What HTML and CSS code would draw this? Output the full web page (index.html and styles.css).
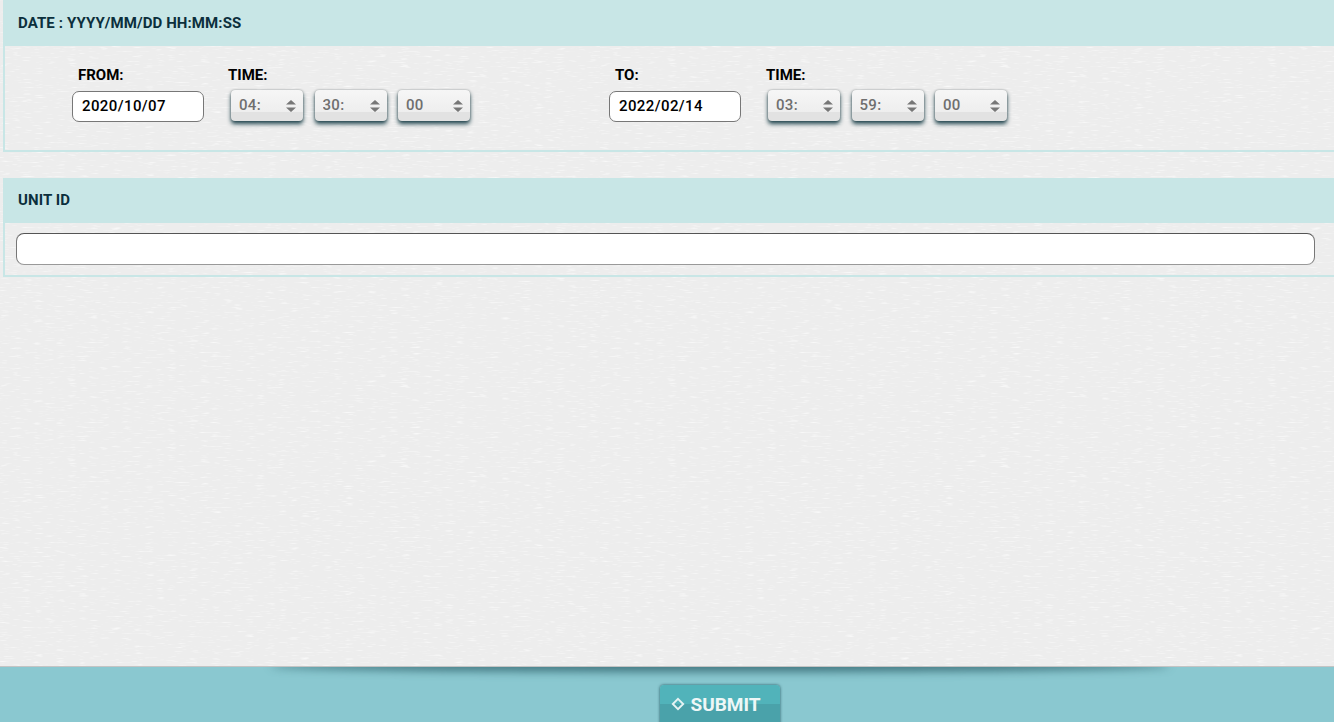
FILE: index.html
```html
<!DOCTYPE html>
<html lang="en">
<head>
<meta charset="utf-8">
<title>Report filter</title>
<link rel="stylesheet" href="styles.css">
</head>
<body>
<main class="content">
  <section class="panel panel-date">
    <h2 class="panel-head">DATE : YYYY/MM/DD HH:MM:SS</h2>
    <div class="range-row">
      <div class="field field-date">
        <label class="label label-indent">FROM:</label>
        <input class="text-input date-input" type="text" value="2020/10/07">
      </div>
      <div class="field field-time">
        <label class="label">TIME:</label>
        <div class="selects">
          <select class="time-select"><option>04:</option></select>
          <select class="time-select"><option>30:</option></select>
          <select class="time-select"><option>00</option></select>
        </div>
      </div>
      <div class="field field-date field-to">
        <label class="label label-indent">TO:</label>
        <input class="text-input date-input" type="text" value="2022/02/14">
      </div>
      <div class="field field-time field-time-to">
        <label class="label">TIME:</label>
        <div class="selects">
          <select class="time-select"><option>03:</option></select>
          <select class="time-select"><option>59:</option></select>
          <select class="time-select"><option>00</option></select>
        </div>
      </div>
    </div>
  </section>
  <section class="panel panel-unit">
    <h2 class="panel-head">UNIT ID</h2>
    <div class="unit-body">
      <input class="text-input unit-input" type="text">
    </div>
  </section>
</main>
<footer class="footer">
  <button class="submit" type="button">
    <svg class="submit-icon" viewBox="0 0 14 14" aria-hidden="true"><path d="M7 1.8 12.2 7 7 12.2 1.8 7Z" fill="none" stroke="#e6f3f3" stroke-width="1.9"/></svg>
    <span>SUBMIT</span>
  </button>
</footer>
</body>
</html>
```
FILE: styles.css
```css
* { box-sizing: border-box; }
html, body { height: 100%; }
body {
  margin: 0;
  height: 722px;
  overflow: hidden;
  display: flex;
  flex-direction: column;
  font-family: "Roboto", "Liberation Sans", sans-serif;
  background-color: #ededed;
  background-image: url("data:image/svg+xml,%3Csvg xmlns='http://www.w3.org/2000/svg' width='600' height='400'%3E%3Cfilter id='n'%3E%3CfeTurbulence type='fractalNoise' baseFrequency='0.09 0.8' numOctaves='2' seed='4'/%3E%3CfeColorMatrix values='0 0 0 0 1 0 0 0 0 1 0 0 0 0 1 2 0 0 0 -1.15'/%3E%3C/filter%3E%3Crect width='600' height='400' filter='url(%23n)'/%3E%3C/svg%3E");
}
.content {
  flex: 1;
  padding-left: 3px;
}
.panel {
  border: 2px solid #c8e6e6;
  border-right: 0;
}
.panel-date {
  height: 152px;
  border-top: 0;
}
.panel-unit {
  height: 99px;
  margin-top: 26px;
}
.panel-head {
  margin: 0;
  background: #c8e6e6;
  color: #0b2f3c;
  font-size: 15px;
  font-weight: 700;
  letter-spacing: 0.1px;
  line-height: 18px;
  padding-left: 13px;
}
.panel-date .panel-head { height: 46px; padding-top: 14px; }
.panel-unit .panel-head { height: 43px; padding-top: 11px; }
.range-row {
  display: flex;
  padding: 20px 0 0 67px;
}
.field { display: flex; flex-direction: column; }
.field-date { width: 132px; }
.field-time { margin-left: 24px; }
.field-time-to { margin-left: 25px; }
.field-to { margin-left: 139px; }
.label {
  color: #000;
  font-size: 15px;
  font-weight: 700;
  line-height: 18px;
  height: 25px;
}
.label-indent { padding-left: 6px; }
.text-input {
  background: #fff;
  border: 1px solid #777;
  border-radius: 7px;
  color: #000;
  font-family: inherit;
  font-size: 15px;
  font-weight: 500;
  letter-spacing: 0.4px;
  outline: 0;
}
.date-input { width: 132px; height: 31px; padding: 0 8px 2px 9px; }
.selects { display: flex; gap: 11.5px; padding-left: 3px; margin-top: -1px; }
.field-time-to .selects { padding-left: 2px; }
.time-select {
  appearance: none;
  -webkit-appearance: none;
  width: 72px;
  height: 31px;
  border: 0;
  border-radius: 4px;
  padding: 0 8px 1px;
  font-family: inherit;
  font-size: 15px;
  font-weight: 500;
  color: #6f6f6f;
  letter-spacing: 0.3px;
  background-color: #eee;
  background-image:
    url("data:image/svg+xml,%3Csvg xmlns='http://www.w3.org/2000/svg' width='12' height='12'%3E%3Cpath d='M6 0l5 4.6H1zM6 12l5-4.6H1z' fill='%23777'/%3E%3C/svg%3E"),
    linear-gradient(#f6f6f6 0, #eeeeee 70%, #e2e2e2 71%, #e2e2e2 100%);
  background-repeat: no-repeat, no-repeat;
  background-position: right 6px center, 0 0;
  background-size: 12px 12px, 100% 100%;
  box-shadow: 0 3px 4px rgba(15, 55, 65, .9), 0 0 2px rgba(0, 0, 0, .35);
}
.unit-body { padding: 10px 19px 0 11px; }
.unit-input {
  display: block;
  width: 100%;
  height: 32px;
  border-top-color: #555;
  border-bottom-color: #999;
  border-radius: 8px;
}
.footer {
  position: relative;
  height: 56px;
  background: #8ac8d0;
  display: flex;
  justify-content: center;
  border-top: 1px solid #c4c4c4;
  overflow: hidden;
}
.footer::before {
  content: "";
  position: absolute;
  left: 270px;
  width: 900px;
  top: -7px;
  height: 12px;
  border-radius: 50%;
  background: rgba(35, 85, 95, .7);
  filter: blur(4px);
}
.submit {
  position: relative;
  margin: 18px 0 0 105px;
  width: 120px;
  height: 46px;
  border: 0;
  border-radius: 4px;
  padding: 0 0 8px 11px;
  display: flex;
  align-items: center;
  gap: 6px;
  color: #eef7f7;
  font-family: inherit;
  font-size: 19px;
  font-weight: 700;
  background: linear-gradient(#51b3ba 0, #51b3ba 41%, #4aa2aa 42%, #4aa2aa 100%);
  box-shadow: 0 0 3px rgba(20, 70, 80, .9);
}
.submit-icon { width: 14px; height: 14px; flex: none; }
```
